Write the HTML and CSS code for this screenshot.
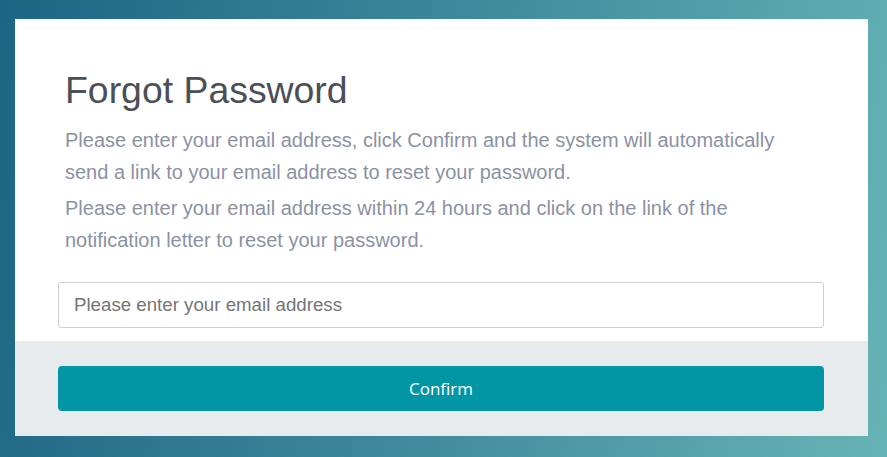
FILE: index.html
```html
<!DOCTYPE html>
<html lang="en">
<head>
<meta charset="utf-8">
<title>Forgot Password</title>
<link rel="stylesheet" href="styles.css">
</head>
<body>
<main class="card">
  <section class="card-body">
    <h1 class="title">Forgot Password</h1>
    <p class="desc">Please enter your email address, click Confirm and the system will automatically send a link to your email address to reset your password.</p>
    <p class="desc">Please enter your email address within 24 hours and click on the link of the notification letter to reset your password.</p>
    <input class="email" type="email" placeholder="Please enter your email address">
  </section>
  <footer class="card-footer">
    <button class="confirm" type="button">Confirm</button>
  </footer>
</main>
</body>
</html>
```
FILE: styles.css
```css
html, body {
  margin: 0;
  height: 100%;
}
body {
  box-sizing: border-box;
  padding: 19px 19px 21px 15px;
  background: linear-gradient(100deg, #1c6584 0%, #3f8a9c 50%, #66b4b6 100%);
  font-family: "Liberation Sans", Arial, sans-serif;
  display: flex;
}
.card {
  flex: 1;
  background: #fff;
  display: flex;
  flex-direction: column;
}
.card-body {
  flex: 1;
  padding: 47px 44px 0 43px;
  display: flex;
  flex-direction: column;
}
.title {
  margin: 0 7px 10px 7px;
  font-size: 37.4px;
  font-weight: 400;
  line-height: 48px;
  color: #4b4f56;
}
.desc {
  margin: 0 7px 4px 7px;
  font-size: 20px;
  line-height: 32px;
  color: #8b92a2;
}
.email {
  margin-top: 22px;
  height: 46px;
  box-sizing: border-box;
  border: 1px solid #cfcfcf;
  border-radius: 3px;
  padding: 0 15px;
  font-family: "Liberation Sans", Arial, sans-serif;
  font-size: 18.7px;
  color: #333;
  outline: none;
}
.email::placeholder {
  color: #757575;
}
.card-footer {
  height: 95px;
  box-sizing: border-box;
  background: #e8ebee;
  padding: 25px 44px 25px 43px;
  display: flex;
}
.confirm {
  flex: 1;
  border: 0;
  border-radius: 4px;
  background: #0296a5;
  color: #fff;
  font-family: "Open Sans", "Segoe UI", sans-serif;
  font-size: 17px;
  cursor: pointer;
}
```
